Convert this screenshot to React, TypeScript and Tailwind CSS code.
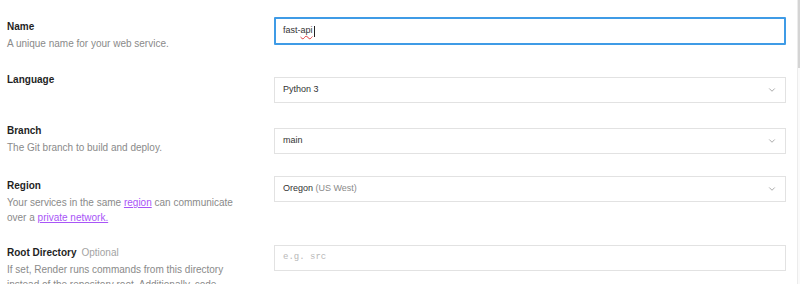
import { ChevronDown } from 'lucide-react';

const font = { fontFamily: '"Liberation Sans", Arial, sans-serif' };

const Label = ({ children, optional }: { children: React.ReactNode; optional?: boolean }) => (
  <div className="text-[10px] leading-[14px] font-bold text-[#1f1f1f]">
    {children}
    {optional && <span className="ml-[5px] font-normal text-[#a3a3a3]">Optional</span>}
  </div>
);

const Desc = ({ children }: { children: React.ReactNode }) => (
  <p className="mt-[2px] max-w-[235px] text-[10px] leading-[15px] text-[#8a8a8a]">{children}</p>
);

const Select = ({ children }: { children: React.ReactNode }) => (
  <div className="flex h-[26px] items-center justify-between border border-[#e2e2e2] bg-white pl-[8px] pr-[8px] text-[9px] text-[#333]">
    <span>{children}</span>
    <ChevronDown className="h-[10px] w-[10px] text-[#777]" strokeWidth={1.5} />
  </div>
);

export default function App() {
  return (
    <div className="flex h-[284px] w-[800px] overflow-hidden bg-white" style={font}>
      <div className="flex-1 pl-[7px] pr-[11px]">
        {/* Name */}
        <div className="mt-[17px] flex items-start">
          <div className="w-[267px] pt-[3px]">
            <Label>Name</Label>
            <Desc>A unique name for your web service.</Desc>
          </div>
          <div className="flex h-[28px] flex-1 items-center rounded-[1px] border-2 border-[#3f9be6] pl-[7px] text-[9px] text-[#333]">
            <span>fast-</span>
            <span className="underline decoration-wavy decoration-[#e03c3c] decoration-1 underline-offset-2">api</span>
            <span className="ml-[1px] inline-block h-[11px] w-px bg-[#222]" />
          </div>
        </div>

        {/* Language */}
        <div className="mt-[22px] flex items-start">
          <div className="w-[267px]">
            <Label>Language</Label>
          </div>
          <div className="mt-[4px] flex-1">
            <Select>Python 3</Select>
          </div>
        </div>

        {/* Branch */}
        <div className="mt-[21px] flex items-start">
          <div className="w-[267px]">
            <Label>Branch</Label>
            <Desc>The Git branch to build and deploy.</Desc>
          </div>
          <div className="mt-[4px] flex-1">
            <Select>main</Select>
          </div>
        </div>

        {/* Region */}
        <div className="mt-[21px] flex items-start">
          <div className="w-[267px] pt-[3px]">
            <Label>Region</Label>
            <Desc>
              Your services in the same{' '}
              <a className="text-[#a855f7] underline">region</a> can communicate over a{' '}
              <a className="text-[#a855f7] underline">private network.</a>
            </Desc>
          </div>
          <div className="flex-1">
            <Select>
              Oregon <span className="text-[#8a8a8a]">(US West)</span>
            </Select>
          </div>
        </div>

        {/* Root Directory */}
        <div className="mt-[20px] flex items-start">
          <div className="w-[267px] pt-[1px]">
            <Label optional>Root Directory</Label>
            <Desc>
              If set, Render runs commands from this directory instead of the repository root. Additionally, code
              changes outside of this directory do not trigger an auto-deploy.
            </Desc>
          </div>
          <div className="flex-1">
            <div
              className="flex h-[26px] items-center border border-[#e2e2e2] pl-[8px] text-[9px] text-[#b8b8b8]"
              style={{ fontFamily: '"Liberation Mono", monospace' }}
            >
              e.g. src
            </div>
          </div>
        </div>
      </div>
      <div className="flex w-[3px] flex-col border-l border-[#ececec] bg-[#fafafa]">
        <div className="h-[68px] w-[2px] bg-[#d4d4d4]" />
      </div>
    </div>
  );
}
